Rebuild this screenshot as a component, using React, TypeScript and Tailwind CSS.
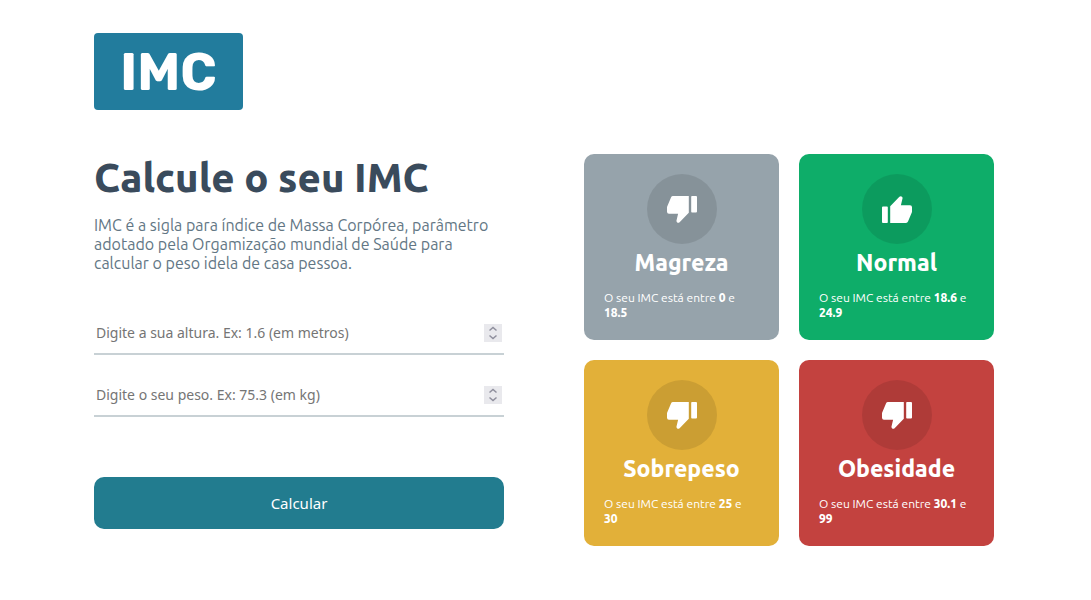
import { useState } from "react";

type Level = {
  title: string;
  from: string;
  to: string;
  color: string;
  icon: "up" | "down";
};

const levels: Level[] = [
  { title: "Magreza", from: "0", to: "18.5", color: "bg-[#96a3ab]", icon: "down" },
  { title: "Normal", from: "18.6", to: "24.9", color: "bg-[#0ead69]", icon: "up" },
  { title: "Sobrepeso", from: "25", to: "30", color: "bg-[#e2b039]", icon: "down" },
  { title: "Obesidade", from: "30.1", to: "99", color: "bg-[#c3423f]", icon: "down" },
];

function Thumb({ direction }: { direction: "up" | "down" }) {
  return (
    <svg
      viewBox="0 0 30 27"
      className={direction === "down" ? "w-[30px] rotate-180" : "w-[30px]"}
      fill="currentColor"
      aria-hidden="true"
    >
      <path d="M1 10.500h4a.8.8 0 0 1 .8.8V26.200a.8.8 0 0 1-.8.8H1a1 1 0 0 1-1-1V11.500a1 1 0 0 1 1-1z" />
      <path d="M8.200 27V10.200L17.400.7a2 2 0 0 1 2.800.4q.5.7.3 1.500L18.900 9.200H28a2 2 0 0 1 2 2v4.200q0 .6-.2 1.200L26 25.600A2.200 2.200 0 0 1 24 27z" />
    </svg>
  );
}

function Card({ level }: { level: Level }) {
  return (
    <article className={`flex flex-col items-center rounded-[10px] p-5 text-white ${level.color}`}>
      <div className="flex size-[70px] items-center justify-center rounded-full bg-black/10">
        <Thumb direction={level.icon} />
      </div>
      <h2 className="mt-1 text-[23px] leading-[30px] font-extrabold">{level.title}</h2>
      <p className="mt-3 w-full pr-1 text-[12px] leading-[15px]">
        O seu IMC está entre <strong className="font-extrabold">{level.from}</strong> e{" "}
        <strong className="font-extrabold">{level.to}</strong>
      </p>
    </article>
  );
}

type FieldProps = {
  id: string;
  label: string;
  value: string;
  onChange: (value: string) => void;
};

function NumberField({ id, label, value, onChange }: FieldProps) {
  const step = (delta: number) => onChange(String(Math.max(0, Number(value) + delta)));
  return (
    <div className="flex h-11 items-center border-b-2 border-[#c8d1d5] px-0.5 pt-px">
      <input
        id={id}
        type="number"
        step="any"
        aria-label={label}
        placeholder={label}
        value={value}
        onChange={(event) => onChange(event.target.value)}
        className="h-8 min-w-0 flex-1 text-[14px] leading-6 outline-none [appearance:textfield] placeholder:text-[#757575] [&::-webkit-inner-spin-button]:appearance-none"
      />
      <div className="flex w-[18px] flex-col bg-[#e9e9ed] text-[#8f8f9d]">
        <button type="button" aria-label="Aumentar" className="flex h-[9px] items-center justify-center" onClick={() => step(1)}>
          <svg viewBox="0 0 10 9" className="h-[9px] w-[10px]" fill="none" stroke="currentColor" strokeWidth="1.500" aria-hidden="true">
            <path d="M1.500 6.500 5 3.500 8.500 6.500" />
          </svg>
        </button>
        <button type="button" aria-label="Diminuir" className="flex h-[9px] items-center justify-center" onClick={() => step(-1)}>
          <svg viewBox="0 0 10 9" className="h-[9px] w-[10px]" fill="none" stroke="currentColor" strokeWidth="1.500" aria-hidden="true">
            <path d="M1.500 2.500 5 5.500 8.500 2.500" />
          </svg>
        </button>
      </div>
    </div>
  );
}

export default function App() {
  const [height, setHeight] = useState("");
  const [weight, setWeight] = useState("");

  return (
    <div className="pr-[3px] font-['Ubuntu','Noto_Sans',sans-serif]">
      <div className="mx-auto max-w-[900px]">
        <header className="py-[33px]">
          <div className="flex h-[77px] w-[149px] items-center justify-center rounded bg-[#227c9d] pt-px font-['Rubik','Inter',sans-serif] text-[52px] font-bold text-white">
            IMC
          </div>
        </header>
        <main className="mt-[11px] grid grid-cols-2 gap-20">
          <section>
            <h1 className="text-[40px] leading-[48px] font-extrabold text-[#3a4b5c]">Calcule o seu IMC</h1>
            <p className="mt-3.5 text-[16px] leading-[19px] text-[#627684]">
              IMC é a sigla para índice de Massa Corpórea, parâmetro adotado pela Orgamização mundial de Saúde para
              calcular o peso idela de casa pessoa.
            </p>
            <form className="mt-[38px] font-['Noto_Sans',sans-serif]" onSubmit={(event) => event.preventDefault()}>
              <div className="flex flex-col gap-[18px]">
                <NumberField id="height" label="Digite a sua altura. Ex: 1.6 (em metros)" value={height} onChange={setHeight} />
                <NumberField id="weight" label="Digite o seu peso. Ex: 75.3 (em kg)" value={weight} onChange={setWeight} />
              </div>
              <button type="submit" className="mt-[60px] h-[52px] w-full rounded-[10px] bg-[#227c8f] text-[15px] text-white">
                Calcular
              </button>
            </form>
          </section>
          <section className="grid grid-cols-2 content-start gap-5">
            {levels.map((level) => (
              <Card key={level.title} level={level} />
            ))}
          </section>
        </main>
      </div>
    </div>
  );
}
